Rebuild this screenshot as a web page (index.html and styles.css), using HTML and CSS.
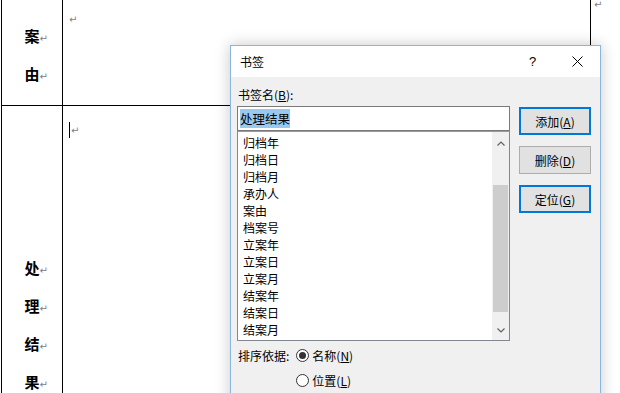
FILE: index.html
```html
<!DOCTYPE html>
<html lang="zh-CN">
<head>
<meta charset="utf-8">
<title>书签</title>
<link rel="stylesheet" href="styles.css">
</head>
<body>
<div class="doc">
  <div class="table">
    <div class="cell head-cell row1">
      <p class="vchar">案<span class="pm">↵</span></p>
      <p class="vchar">由<span class="pm">↵</span></p>
    </div>
    <div class="cell body-cell row1">
      <p class="line first"><span class="pm">↵</span></p>
    </div>
    <div class="cell head-cell row2">
      <p class="vchar">处<span class="pm">↵</span></p>
      <p class="vchar">理<span class="pm">↵</span></p>
      <p class="vchar">结<span class="pm">↵</span></p>
      <p class="vchar">果<span class="pm">↵</span></p>
    </div>
    <div class="cell body-cell row2">
      <p class="line second"><span class="caret"></span><span class="pm">↵</span></p>
    </div>
  </div>
  <span class="pm rowend">↵</span>
</div>

<div class="dialog">
  <div class="titlebar">
    <span class="title">书签</span>
    <span class="tbtn help">?</span>
    <span class="tbtn close">
      <svg width="11" height="11" viewBox="0 0 11 11"><path d="M0.5 0.5 L10.5 10.5 M10.5 0.5 L0.5 10.5" stroke="#000" stroke-width="1" fill="none"/></svg>
    </span>
  </div>
  <div class="dbody">
    <div class="name-label">书签名(<u>B</u>):</div>
    <div class="main">
      <div class="leftcol">
        <div class="input"><span class="sel">处理结果</span></div>
        <div class="list">
          <ul class="items">
            <li>归档年</li>
            <li>归档日</li>
            <li>归档月</li>
            <li>承办人</li>
            <li>案由</li>
            <li>档案号</li>
            <li>立案年</li>
            <li>立案日</li>
            <li>立案月</li>
            <li>结案年</li>
            <li>结案日</li>
            <li>结案月</li>
          </ul>
          <div class="scrollbar">
            <div class="arrow up"><svg width="8" height="5" viewBox="0 0 8 5"><path d="M0.5 4.5 L4 1 L7.5 4.5" stroke="#606060" stroke-width="1.2" fill="none"/></svg></div>
            <div class="track"><div class="thumb"></div></div>
            <div class="arrow down"><svg width="8" height="5" viewBox="0 0 8 5"><path d="M0.5 0.5 L4 4 L7.5 0.5" stroke="#606060" stroke-width="1.2" fill="none"/></svg></div>
          </div>
        </div>
      </div>
      <div class="btns">
        <div class="btn default">添加(<u>A</u>)</div>
        <div class="btn">删除(<u>D</u>)</div>
        <div class="btn default">定位(<u>G</u>)</div>
      </div>
    </div>
    <div class="sort">
      <span class="sort-label">排序依据:</span>
      <span class="opt"><span class="radio on"></span>名称(<u>N</u>)</span>
      <span></span>
      <span class="opt"><span class="radio"></span>位置(<u>L</u>)</span>
    </div>
  </div>
</div>
</body>
</html>
```

FILE: styles.css
```css
html, body {
  margin: 0;
  padding: 0;
  background: #fff;
  width: 620px;
  height: 393px;
  overflow: hidden;
}

.doc {
  display: flex;
  align-items: flex-start;
  font-family: "Noto Sans CJK SC", sans-serif;
}

.table {
  display: grid;
  grid-template-columns: 61px 527px;
  grid-template-rows: 106px 290px;
  margin-left: 1px;
  border-left: 1px solid #000;
  border-right: 1px solid #000;
}

.cell {
  box-sizing: border-box;
}

.head-cell {
  border-right: 1px solid #000;
  text-align: center;
}

.row1 {
  border-bottom: 1px solid #000;
}

.head-cell.row1 {
  padding-top: 17px;
}

.head-cell.row2 {
  padding-top: 143px;
}

.vchar {
  margin: 0;
  height: 38px;
  line-height: 38px;
  font-size: 15px;
  font-weight: 700;
  color: #000;
}

.pm {
  display: inline-block;
  width: 0;
  white-space: nowrap;
  font-family: "DejaVu Sans", sans-serif;
  font-size: 10px;
  line-height: 10px;
  font-weight: 400;
  color: #808080;
  vertical-align: baseline;
}

.line {
  margin: 0;
  padding-left: 6px;
  line-height: 16px;
}

.line.first {
  padding-top: 8px;
}

.line.second {
  padding-top: 13px;
}

.caret {
  display: inline-block;
  width: 1px;
  height: 16px;
  background: #000;
  vertical-align: -4px;
  margin-right: 1px;
}

.rowend {
  margin-left: 3px;
  margin-top: 0;
  line-height: 10px;
}

/* Dialog */
.dialog {
  position: absolute;
  left: 230px;
  top: 45px;
  width: 371px;
  height: 370px;
  box-sizing: border-box;
  border: 1px solid #8ab6dc;
  background: #f0f0f0;
  box-shadow: 0 0 14px rgba(0, 0, 0, 0.22);
  font-family: "Noto Sans CJK SC", sans-serif;
  font-size: 12px;
  color: #000;
}

.titlebar {
  height: 31px;
  background: #fff;
  display: flex;
  align-items: center;
  padding-left: 9px;
}

.title {
  flex: 1;
  line-height: 16px;
}

.tbtn {
  width: 46px;
  height: 31px;
  display: flex;
  align-items: center;
  justify-content: center;
}

.help {
  font-family: "Liberation Sans", sans-serif;
  font-size: 13px;
  padding-left: 3px;
  box-sizing: border-box;
}

.dbody {
  padding: 10px 8px 0 6px;
}

.name-label {
  line-height: 16px;
  padding-left: 1px;
}

.main {
  display: flex;
  margin-top: 3px;
}

.leftcol {
  width: 273px;
  display: flex;
  flex-direction: column;
}

.input {
  height: 25px;
  box-sizing: border-box;
  border: 1px solid #7a7a7a;
  background: #fff;
  padding: 0 2px;
  display: flex;
  align-items: center;
}

.sel {
  background: #99c9ef;
  line-height: 19px;
  font-size: 12.5px;
}

.list {
  height: 210px;
  box-sizing: border-box;
  border: 1px solid #828790;
  border-top-color: #9a9a9a;
  background: #fff;
  display: flex;
}

.items {
  flex: 1;
  list-style: none;
  margin: 0;
  padding: 2px 0 0 5px;
  overflow: hidden;
}

.items li {
  line-height: 17px;
  height: 17px;
}

.scrollbar {
  width: 17px;
  background: #f0f0f0;
  display: flex;
  flex-direction: column;
}

.arrow {
  height: 17px;
  display: flex;
  justify-content: center;
}

.arrow.up {
  align-items: flex-end;
  height: 14px;
}

.arrow.down {
  align-items: center;
  height: 20px;
}

.track {
  flex: 1;
  display: flex;
  flex-direction: column;
  align-items: center;
}

.thumb {
  width: 15px;
  height: 127px;
  margin-top: 39px;
  background: #cdcdcd;
}

.btns {
  margin-left: 9px;
  width: 72px;
  display: flex;
  flex-direction: column;
  gap: 11px;
  padding-top: 1px;
}

.btn {
  height: 28px;
  box-sizing: border-box;
  border: 1px solid #adadad;
  background: #e1e1e1;
  display: flex;
  align-items: center;
  justify-content: center;
}

.btn.default {
  border: 2px solid #0078d7;
}

.sort {
  display: grid;
  grid-template-columns: auto auto;
  justify-content: start;
  column-gap: 7px;
  row-gap: 8px;
  margin-top: 6px;
  padding-left: 1px;
}

.sort-label,
.opt {
  line-height: 17px;
}

.opt {
  display: flex;
  align-items: center;
}

.radio {
  width: 13px;
  height: 13px;
  box-sizing: border-box;
  border: 1px solid #333;
  border-radius: 50%;
  background: #fff;
  margin-right: 3px;
  display: flex;
  align-items: center;
  justify-content: center;
}

.radio.on::after {
  content: "";
  width: 7px;
  height: 7px;
  border-radius: 50%;
  background: #333;
}
```
